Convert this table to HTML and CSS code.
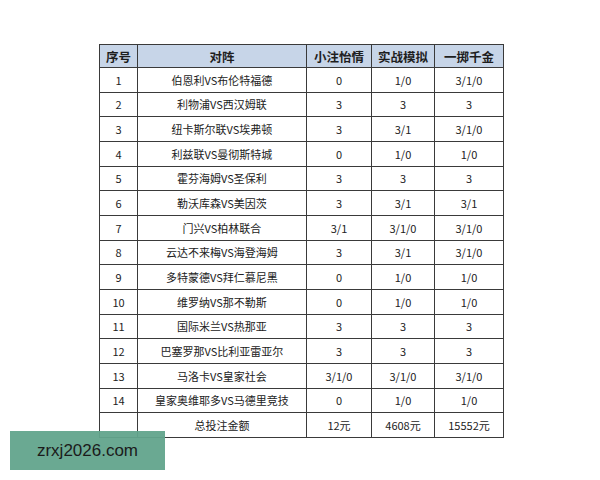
FILE: index.html
```html
<!DOCTYPE html>
<html lang="zh">
<head>
<meta charset="utf-8">
<title>Table</title>
<link rel="stylesheet" href="styles.css">
</head>
<body>
<div class="page">
  <table class="bets">
    <colgroup>
      <col class="c1"><col class="c2"><col class="c3"><col class="c4"><col class="c5">
    </colgroup>
    <thead>
      <tr><th>序号</th><th>对阵</th><th>小注怡情</th><th>实战模拟</th><th>一掷千金</th></tr>
    </thead>
    <tbody>
      <tr><td>1</td><td>伯恩利VS布伦特福德</td><td>0</td><td>1/0</td><td>3/1/0</td></tr>
      <tr><td>2</td><td>利物浦VS西汉姆联</td><td>3</td><td>3</td><td>3</td></tr>
      <tr><td>3</td><td>纽卡斯尔联VS埃弗顿</td><td>3</td><td>3/1</td><td>3/1/0</td></tr>
      <tr><td>4</td><td>利兹联VS曼彻斯特城</td><td>0</td><td>1/0</td><td>1/0</td></tr>
      <tr><td>5</td><td>霍芬海姆VS圣保利</td><td>3</td><td>3</td><td>3</td></tr>
      <tr><td>6</td><td>勒沃库森VS美因茨</td><td>3</td><td>3/1</td><td>3/1</td></tr>
      <tr><td>7</td><td>门兴VS柏林联合</td><td>3/1</td><td>3/1/0</td><td>3/1/0</td></tr>
      <tr><td>8</td><td>云达不来梅VS海登海姆</td><td>3</td><td>3/1</td><td>3/1/0</td></tr>
      <tr><td>9</td><td>多特蒙德VS拜仁慕尼黑</td><td>0</td><td>1/0</td><td>1/0</td></tr>
      <tr><td>10</td><td>维罗纳VS那不勒斯</td><td>0</td><td>1/0</td><td>1/0</td></tr>
      <tr><td>11</td><td>国际米兰VS热那亚</td><td>3</td><td>3</td><td>3</td></tr>
      <tr><td>12</td><td>巴塞罗那VS比利亚雷亚尔</td><td>3</td><td>3</td><td>3</td></tr>
      <tr><td>13</td><td>马洛卡VS皇家社会</td><td>3/1/0</td><td>3/1/0</td><td>3/1/0</td></tr>
      <tr><td>14</td><td>皇家奥维耶多VS马德里竞技</td><td>0</td><td>1/0</td><td>1/0</td></tr>
      <tr><td></td><td>总投注金额</td><td>12元</td><td>4608元</td><td>15552元</td></tr>
    </tbody>
  </table>
  <div class="mark">zrxj2026.com</div>
</div>
</body>
</html>
```
FILE: styles.css
```css
html, body {
  margin: 0;
  padding: 0;
  background: #ffffff;
}
.page {
  position: relative;
  width: 600px;
  height: 480px;
  padding: 44px 0 0 99px;
  box-sizing: border-box;
}
.bets {
  border-collapse: collapse;
  table-layout: fixed;
  width: 404px;
  font-family: "SimSun", "Noto Sans CJK SC", sans-serif;
  font-size: 11px;
  color: #222;
}
.c1 { width: 38px; }
.c2 { width: 169px; }
.c3 { width: 65px; }
.c4 { width: 63px; }
.c5 { width: 69px; }
.bets th, .bets td {
  border: 1px solid #3a3a3a;
  text-align: center;
  padding: 0;
  white-space: nowrap;
}
.bets th {
  background: #c7d5e8;
  font-weight: bold;
  font-size: 12.5px;
  height: 22px;
  color: #1e1e1e;
}
.bets td {
  height: 23.67px;
}
.mark {
  position: absolute;
  left: 10px;
  top: 431px;
  width: 155px;
  height: 39px;
  background: rgba(98, 164, 140, 0.95);
  font-family: "Liberation Sans", Arial, sans-serif;
  font-size: 17px;
  color: #1b1b1b;
  display: flex;
  align-items: center;
  justify-content: center;
  letter-spacing: 0;
}
```
